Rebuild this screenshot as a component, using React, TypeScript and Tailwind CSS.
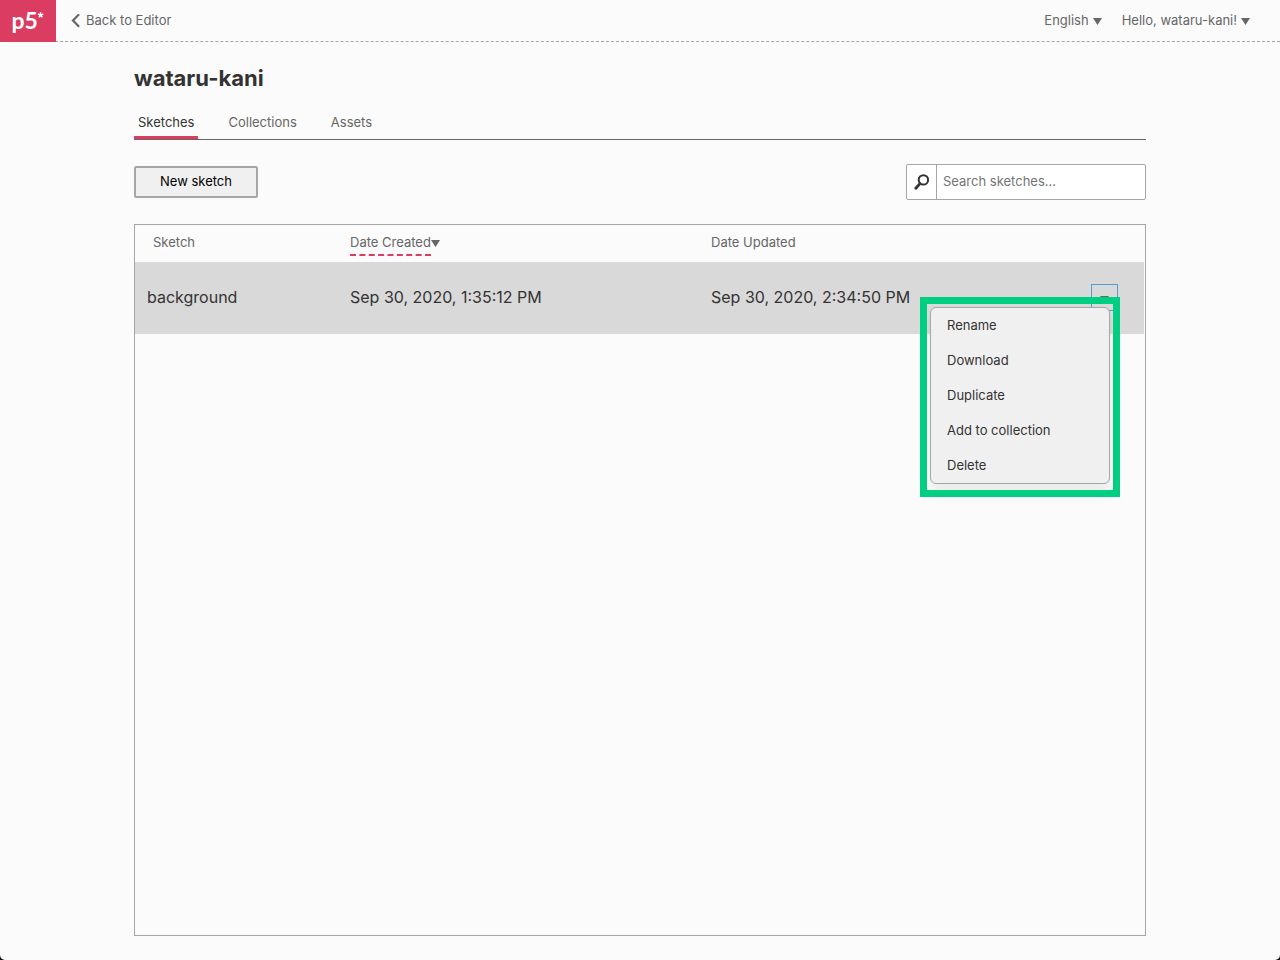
import { useState } from 'react';

const tabs = ['Sketches', 'Collections', 'Assets'];
const actions = ['Rename', 'Download', 'Duplicate', 'Add to collection', 'Delete'];
const sketches = [
  { id: 1, name: 'background', created: 'Sep 30, 2020, 1:35:12 PM', updated: 'Sep 30, 2020, 2:34:50 PM' },
];

function Triangle() {
  return (
    <svg className="w-[9px] h-2" viewBox="0 0 9 8" fill="#666" aria-hidden="true">
      <path d="M0 1h9L4.5 8z" />
    </svg>
  );
}

function Nav() {
  return (
    <header className="flex items-center h-[42px] border-b border-dashed border-[#a6a6a6] text-[13px] text-[#666]">
      <a href="#" aria-label="p5" className="flex items-center justify-center w-14 h-[42px] -mb-px bg-[#db3c61]">
        <svg className="w-14 h-[42px]" viewBox="0 0 56 42" fill="#fff" aria-hidden="true">
          <text x="11.5" y="29" fontFamily="Lato, sans-serif" fontWeight="700" fontSize="23">p5</text>
          <path d="M40.6 15V12.2M40.6 15l2.7-.9M40.6 15l1.7 2.3M40.6 15l-1.7 2.3M40.6 15l-2.7-.9" stroke="#fff" strokeWidth="1.5" />
        </svg>
      </a>
      <a href="#" className="flex items-center gap-1.5 ml-[15px]">
        <svg className="w-[9px] h-[14px]" viewBox="0 0 9 14" fill="none" stroke="#666" strokeWidth="2.2" aria-hidden="true">
          <path d="M8.1 0.3L2 6.5l6.1 6.2" />
        </svg>
        Back to Editor
      </a>
      <div className="flex items-center gap-5 ml-auto pr-[30px]">
        <button className="flex items-center gap-1">English <Triangle /></button>
        <button className="flex items-center gap-1">Hello, wataru-kani! <Triangle /></button>
      </div>
    </header>
  );
}

function SketchMenu() {
  return (
    <div className="absolute z-10 top-[23px] right-2 w-[180px]">
      <ul className="border border-[#a6a6a6] rounded-md bg-[#f0f0f0] shadow-[0_12px_12px_rgba(0,0,0,0.06)]">
        {actions.map((a) => (
          <li key={a}>
            <button className="block w-full h-[35px] px-4 pt-px text-left text-[13px] text-[#333]">{a}</button>
          </li>
        ))}
      </ul>
      <div className="absolute -top-[10px] -inset-x-[10px] -bottom-[13px] border-[7px] border-[#00cf83] pointer-events-none" />
    </div>
  );
}

export default function App() {
  const [open, setOpen] = useState(true);
  const [query, setQuery] = useState('');

  return (
    <div className="bg-[#1c0508] font-[Inter,sans-serif]">
      <div className="flex flex-col min-h-screen bg-[#fbfbfb] text-[#333] rounded-b-[5px]">
        <Nav />
        <main className="flex flex-col flex-1 w-full max-w-[1012px] mx-auto pt-5 pb-6">
          <h1 className="text-[22px] leading-8 font-bold">wataru-kani</h1>
          <nav className="flex gap-[26px] h-[46px] border-b border-[#666] text-[13px]">
            {tabs.map((t, i) => (
              <a
                key={t}
                href="#"
                className={
                  i === 0
                    ? 'flex items-center px-1 pt-4 border-b-3 border-[#db3c61] text-[#333]'
                    : 'flex items-center px-1 pt-4 border-b-3 border-transparent text-[#666]'
                }
              >
                {t}
              </a>
            ))}
          </nav>
          <div className="flex items-center justify-between mt-6">
            <button className="w-[124px] h-8 border-2 border-[#a6a6a6] rounded-xs bg-[#f0f0f0] text-[13px] text-black">
              New sketch
            </button>
            <div className="flex w-60 h-9 border border-[#a6a6a6] rounded-xs bg-white">
              <label htmlFor="search" aria-label="Search sketches" className="flex items-center justify-center w-[30px] border-r border-[#a6a6a6]">
                <svg className="w-4 h-4" viewBox="0 0 16 16" fill="none" stroke="#333" aria-hidden="true">
                  <circle cx="9.4" cy="5.9" r="4.7" strokeWidth="2" />
                  <path d="M6 9.6L1.8 14.2" strokeWidth="2.8" strokeLinecap="round" />
                </svg>
              </label>
              <input
                id="search"
                type="text"
                value={query}
                onChange={(e) => setQuery(e.target.value)}
                placeholder="Search sketches..."
                className="flex-1 min-w-0 px-1.5 text-[13px] outline-none placeholder:text-[#757575]"
              />
            </div>
          </div>
          <div className="flex-1 mt-6 pr-px border border-[#a6a6a6]">
            <table className="w-full table-fixed text-left">
              <thead>
                <tr className="h-[37px] text-[13px] text-[#666]">
                  <th className="w-[215px] pl-[18px] pb-0.5 font-normal">Sketch</th>
                  <th className="w-[361px] pb-0.5 font-normal">
                    <button className="flex items-start pt-1">
                      <span className="pb-0.5 border-b-2 border-dashed border-[#db3c61]">Date Created</span>
                      <span className="pt-1.5"><Triangle /></span>
                    </button>
                  </th>
                  <th className="pb-0.5 font-normal">Date Updated</th>
                  <th className="w-[53px]" aria-label="Actions" />
                </tr>
              </thead>
              <tbody>
                {sketches.map((s) => (
                  <tr key={s.id} className="h-[72px] bg-[#d9d9d9] text-base">
                    <th className="pl-3 pb-0.5 font-normal"><a href="#">{s.name}</a></th>
                    <td className="pb-0.5">{s.created}</td>
                    <td className="pb-0.5">{s.updated}</td>
                    <td className="pb-0.5">
                      <div className="relative w-[27px]">
                        <button
                          aria-label="Toggle sketch options"
                          onClick={() => setOpen(!open)}
                          className="flex justify-center w-[27px] h-[27px] pt-2.5 border border-[#4b9fd5]"
                        >
                          <Triangle />
                        </button>
                        {open && <SketchMenu />}
                      </div>
                    </td>
                  </tr>
                ))}
              </tbody>
            </table>
          </div>
        </main>
      </div>
    </div>
  );
}
